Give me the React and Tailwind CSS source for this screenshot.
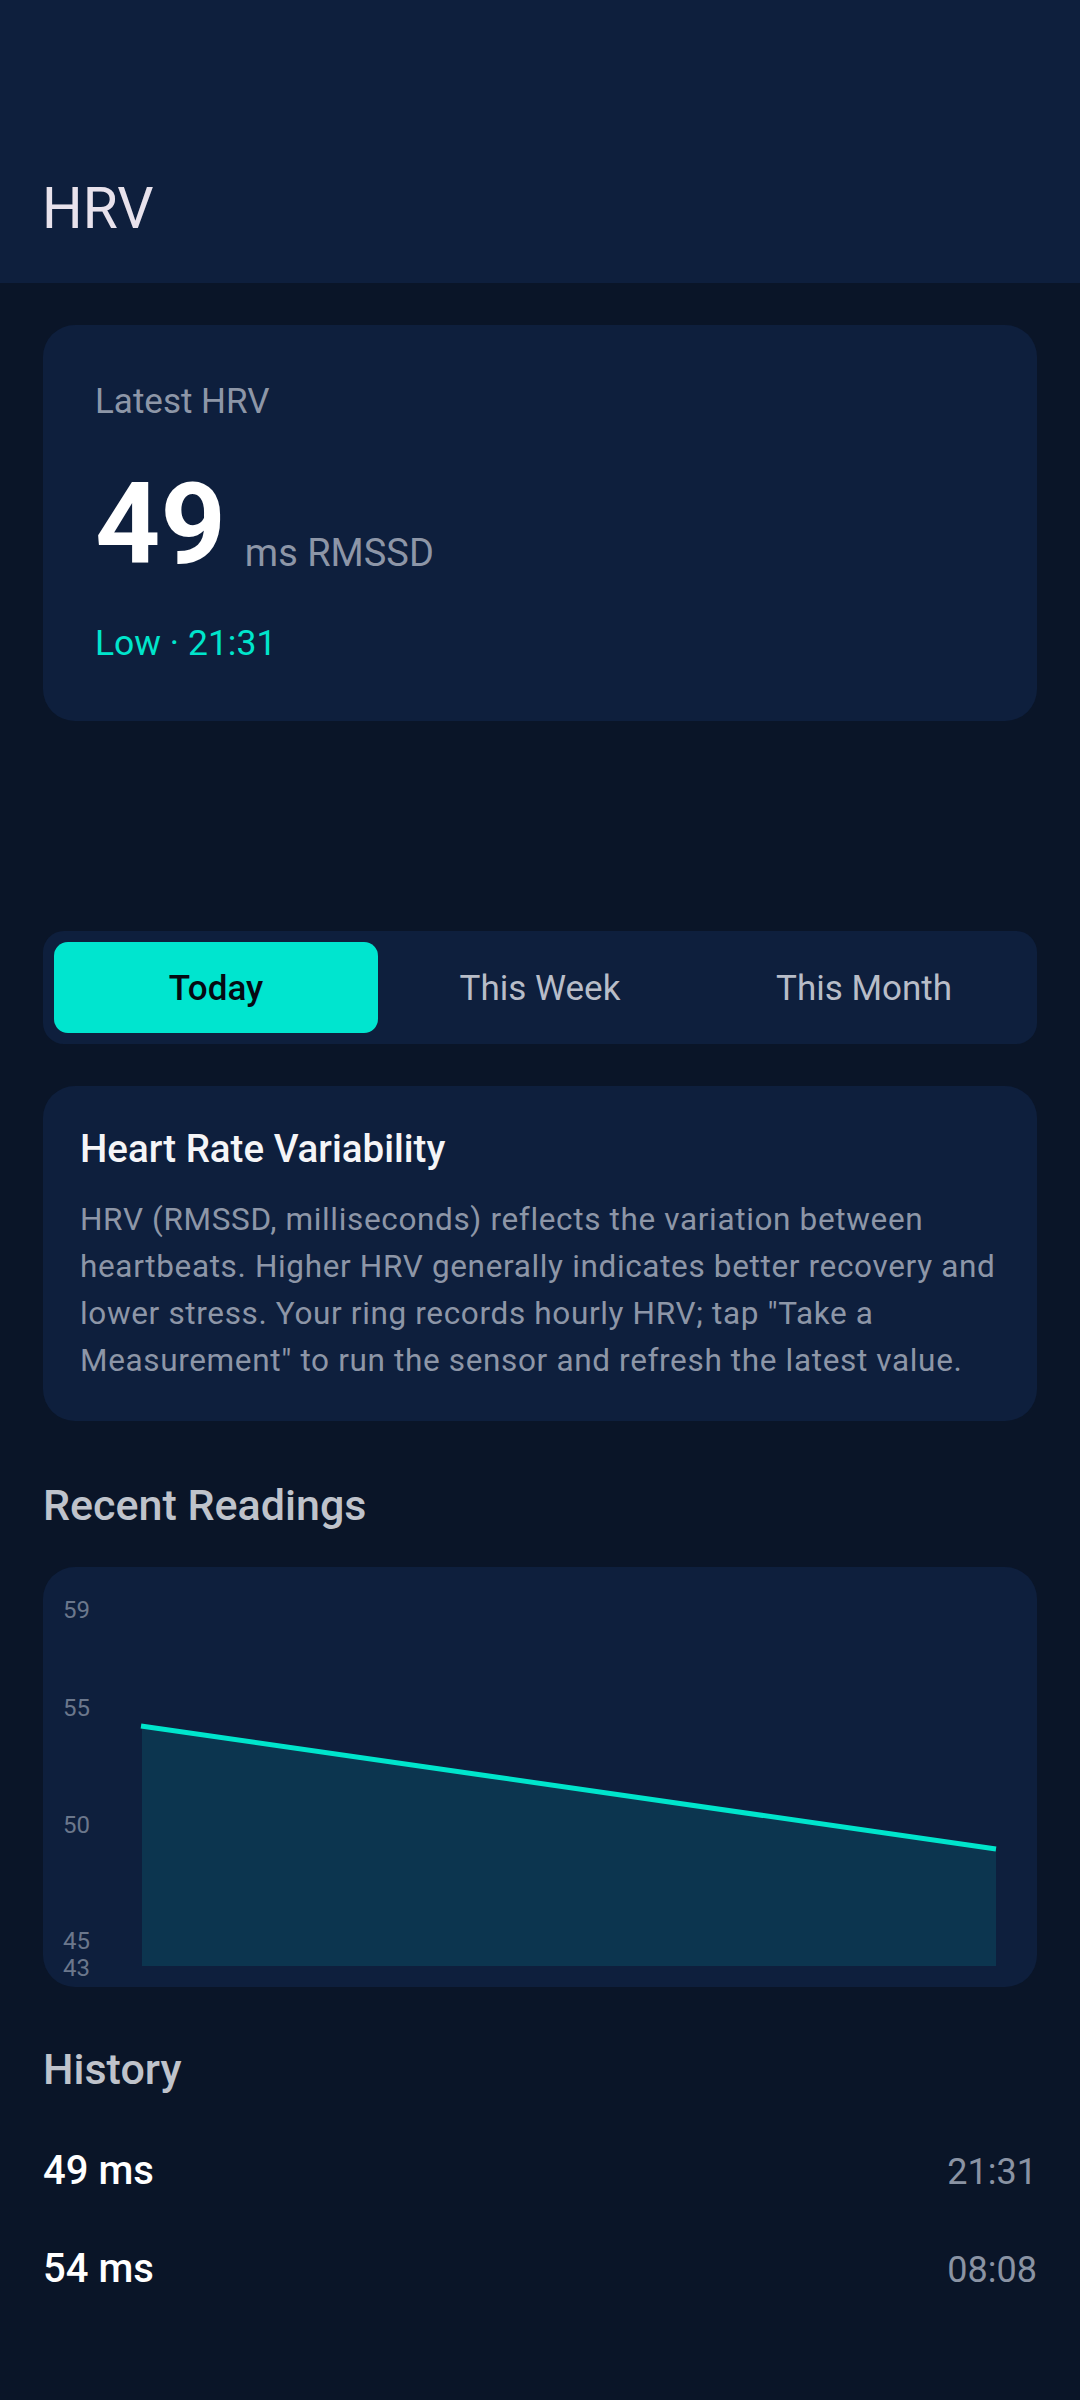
import { useState } from 'react'

const history = [
    { value: 49, time: '21:31' },
    { value: 54, time: '08:08' },
]

const ranges = ['Today', 'This Week', 'This Month']

function ReadingsChart() {
    // card-local coordinates, plot area from x 99 to 953, bottom at 399
    const labels = [
        { text: '59', y: 51 },
        { text: '55', y: 149 },
        { text: '50', y: 266 },
        { text: '45', y: 382 },
        { text: '43', y: 409 },
    ]
    return (
        <svg viewBox="0 0 994 420" className="block w-full h-[420px]">
            {labels.map(l => (
                <text
                    key={l.text}
                    x="20"
                    y={l.y}
                    fontSize="24"
                    fill="#6b778c"
                    fontFamily="Roboto, sans-serif"
                >
                    {l.text}
                </text>
            ))}
            <polygon points="99,159 953,282 953,399 99,399" fill="#0c354f" />
            <line x1="98" y1="159" x2="953" y2="282" stroke="#00e5cc" strokeWidth="5" />
        </svg>
    )
}

export default function App() {
    const [range, setRange] = useState('Today')

    return (
        <div className="min-h-[2400px] bg-[#0a1528] font-['Roboto',sans-serif]">
            {/* Top bar */}
            <div className="bg-[#0e1f3d] pt-[175px] pb-[40px] px-[42px]">
                <h1 className="text-[57px] leading-[68px] text-[#e8e2ec]">HRV</h1>
            </div>

            <div className="px-[43px] pb-20">
                {/* Latest card */}
                <div className="mt-[42px] bg-[#0e1f3d] rounded-[32px] pt-[56px] pb-[57px] px-[52px]">
                    <p className="text-[35px] leading-[42px] text-[#8d96a7]">Latest HRV</p>
                    <div className="mt-[41px] flex items-baseline">
                        <span className="text-[114px] leading-[120px] font-bold text-white">49</span>
                        <span className="ml-[19px] relative top-[3px] text-[38px] text-[#8d96a7]">ms RMSSD</span>
                    </div>
                    <p className="mt-[38px] text-[35.5px] leading-[42px] text-[#00e5cc]">Low · 21:31</p>
                </div>

                {/* Range tabs */}
                <div className="mt-[210px] bg-[#0e1f3d] rounded-[21px] p-[11px] grid grid-cols-3">
                    {ranges.map(r => (
                        <button
                            key={r}
                            onClick={() => setRange(r)}
                            className={`h-[91px] pt-[4px] rounded-[14px] text-[35px] ${range === r
                                ? 'bg-[#00e5cf] text-[#050a12] font-medium'
                                : 'text-[#b8bdc8]'
                                }`}
                        >
                            {r}
                        </button>
                    ))}
                </div>

                {/* Info card */}
                <div className="mt-[42px] bg-[#0e1f3d] rounded-[32px] pt-[40px] pb-[37px] pl-[37px] pr-[30px]">
                    <h2 className="text-[38.5px] leading-[46px] font-medium text-[#f5f5f7]">
                        Heart Rate Variability
                    </h2>
                    <p className="mt-[24px] text-[31.5px] leading-[47px] tracking-[0.65px] text-[#8d96a7]">
                        HRV (RMSSD, milliseconds) reflects the variation between heartbeats. Higher HRV generally indicates better recovery and lower stress. Your ring records hourly HRV; tap "Take a Measurement" to run the sensor and refresh the latest value.
                    </p>
                </div>

                {/* Recent readings */}
                <h3 className="mt-[59px] text-[43px] leading-[50px] font-medium text-[#bfc3cb]">
                    Recent Readings
                </h3>
                <div className="mt-[37px] bg-[#0e1f3d] rounded-[32px] overflow-hidden">
                    <ReadingsChart />
                </div>

                {/* History */}
                <h3 className="mt-[57px] text-[43px] leading-[50px] font-medium text-[#bfc3cb]">
                    History
                </h3>
                <div className="mt-[52px] flex flex-col gap-[47px]">
                    {history.map(h => (
                        <div key={h.time} className="flex items-baseline justify-between leading-[50px]">
                            <span className="text-[40px] font-medium text-white">{h.value} ms</span>
                            <span className="text-[36px] text-[#8a93a3]">{h.time}</span>
                        </div>
                    ))}
                </div>
            </div>
        </div>
    )
}
